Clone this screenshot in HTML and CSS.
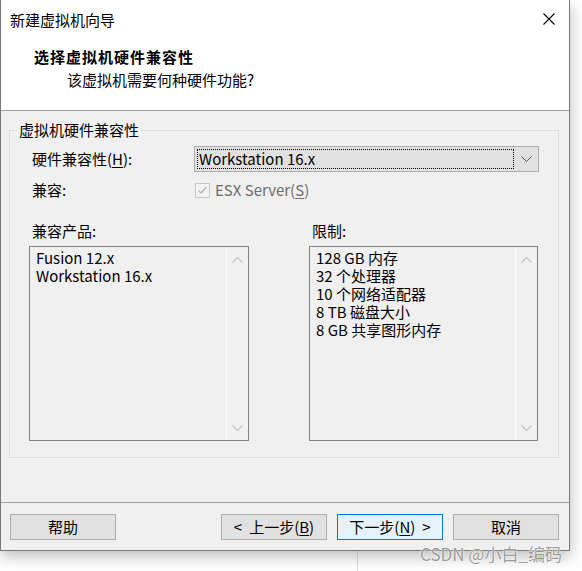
FILE: index.html
```html
<!DOCTYPE html>
<html lang="zh-CN">
<head>
<meta charset="utf-8">
<title>新建虚拟机向导</title>
<link rel="stylesheet" href="styles.css">
</head>
<body>
<div class="bg-line"></div>
<div class="window">
  <div class="titlebar">
    <span class="title">新建虚拟机向导</span>
    <svg class="close" width="12" height="12" viewBox="0 0 12 12"><path d="M0.5 0.5 L11.5 11.5 M11.5 0.5 L0.5 11.5" stroke="#000" stroke-width="1.1" fill="none"/></svg>
  </div>
  <div class="header">
    <div class="h-title">选择虚拟机硬件兼容性</div>
    <div class="h-sub">该虚拟机需要何种硬件功能?</div>
  </div>
  <div class="body">
    <div class="group">
      <div class="group-title">虚拟机硬件兼容性</div>
      <div class="row row-combo">
        <span class="label">硬件兼容性(<u>H</u>):</span>
        <div class="combo">
          <span class="focus">Workstation 16.x</span>
          <svg class="chev" width="11" height="6" viewBox="0 0 11 6"><path d="M0.5 0.5 L5.5 5.5 L10.5 0.5" stroke="#555" stroke-width="1" fill="none"/></svg>
        </div>
      </div>
      <div class="row row-check">
        <span class="label">兼容:</span>
        <span class="check">
          <span class="box"><svg width="13" height="13" viewBox="0 0 13 13"><path d="M2.5 6.5 L5 9 L10.5 3" stroke="#b4b4b4" stroke-width="1.4" fill="none"/></svg></span>
          <span class="check-text">ESX Server(<u>S</u>)</span>
        </span>
      </div>
      <div class="lists">
        <div class="col col-left">
          <div class="col-label">兼容产品:</div>
          <div class="listbox">
            <div class="items">
              <div class="item">Fusion 12.x</div>
              <div class="item">Workstation 16.x</div>
            </div>
            <div class="scroll">
              <svg width="11" height="6" viewBox="0 0 11 6"><path d="M0.5 5.5 L5.5 0.5 L10.5 5.5" stroke="#c4c4c4" stroke-width="1.3" fill="none"/></svg>
              <svg width="11" height="6" viewBox="0 0 11 6"><path d="M0.5 0.5 L5.5 5.5 L10.5 0.5" stroke="#c4c4c4" stroke-width="1.3" fill="none"/></svg>
            </div>
          </div>
        </div>
        <div class="col col-right">
          <div class="col-label">限制:</div>
          <div class="listbox">
            <div class="items">
              <div class="item">128 GB 内存</div>
              <div class="item">32 个处理器</div>
              <div class="item">10 个网络适配器</div>
              <div class="item">8 TB 磁盘大小</div>
              <div class="item">8 GB 共享图形内存</div>
            </div>
            <div class="scroll">
              <svg width="11" height="6" viewBox="0 0 11 6"><path d="M0.5 5.5 L5.5 0.5 L10.5 5.5" stroke="#c4c4c4" stroke-width="1.3" fill="none"/></svg>
              <svg width="11" height="6" viewBox="0 0 11 6"><path d="M0.5 0.5 L5.5 5.5 L10.5 0.5" stroke="#c4c4c4" stroke-width="1.3" fill="none"/></svg>
            </div>
          </div>
        </div>
      </div>
    </div>
  </div>
  <div class="footer">
    <button class="btn">帮助</button>
    <span class="spacer"></span>
    <button class="btn">&lt;<span class="gap"></span>上一步(<u>B</u>)</button>
    <button class="btn btn-default">下一步(<u>N</u>)<span class="gap"></span>&gt;</button>
    <button class="btn">取消</button>
  </div>
</div>
<div class="watermark">CSDN @小白_编码</div>
</body>
</html>
```
FILE: styles.css
```css
* { box-sizing: border-box; }
html, body { margin: 0; padding: 0; }
body {
  width: 582px;
  height: 571px;
  background: #ffffff;
  font-family: "Noto Sans CJK SC", "Noto Sans", sans-serif;
  font-size: 15px;
  color: #000;
  position: relative;
  overflow: hidden;
}
u { text-decoration: underline; text-underline-offset: 2px; }

.bg-line {
  position: absolute;
  left: 357px;
  top: 540px;
  width: 1px;
  height: 40px;
  background: #dedede;
}

.window {
  position: relative;
  width: 570px;
  height: 551px;
  border: 1px solid #777;
  border-top: none;
  background: #f0f0f0;
  box-shadow: 1px 6px 14px rgba(0,0,0,0.25);
  display: flex;
  flex-direction: column;
}

.titlebar {
  height: 38px;
  background: #fff;
  display: flex;
  align-items: center;
  justify-content: space-between;
  padding: 2px 14px 0 9px;
  line-height: 20px;
}
.close { display: block; margin-top: -2px; }

.header {
  height: 73px;
  background: #fff;
  border-bottom: 1px solid #a0a0a0;
  padding: 9px 0 0 33px;
  line-height: 20px;
}
.h-title { font-weight: bold; letter-spacing: 1px; }
.h-sub { margin-top: 3px; padding-left: 33px; }

.body {
  height: 391px;
  padding: 19px 10px 0 8px;
}
.group {
  height: 328px;
  border: 1px solid #dcdcdc;
  padding: 0 19px 0 19px;
  display: flex;
  flex-direction: column;
}
.group-title {
  margin: -11px 0 0 -12px;
  padding: 0 2px;
  background: #f0f0f0;
  line-height: 20px;
  align-self: flex-start;
}

.row { display: flex; align-items: center; }
.label { width: 165px; padding-left: 3px; flex: none; line-height: 20px; }
.row-combo { margin-top: 6px; height: 26px; }
.combo {
  width: 345px;
  height: 26px;
  background: #e1e1e1;
  border: 1px solid #adadad;
  display: flex;
  align-items: center;
  padding: 2px 6px 2px 2px;
}
.focus {
  flex: 1;
  height: 20px;
  border: 1px dotted #000;
  line-height: 18px;
  padding-left: 1px;
}
.chev { margin-left: 7px; display: block; }

.row-check { margin-top: 8px; height: 20px; }
.check { display: flex; align-items: center; color: #6d6d6d; margin-left: 1px; }
.box {
  width: 15px;
  height: 15px;
  border: 1px solid #c6c6c6;
  background: #f4f4f4;
  display: flex;
  align-items: center;
  justify-content: center;
  margin-right: 5px;
}
.box svg { display: block; }
.check-text { line-height: 20px; }

.lists { display: flex; gap: 60px; margin-top: 22px; }
.col-left { width: 220px; }
.col-right { width: 229px; }
.col-label { line-height: 18px; padding-left: 3px; margin-bottom: 6px; }
.listbox {
  height: 195px;
  border: 1px solid #828282;
  display: flex;
}
.items { flex: 1; padding: 2px 0 0 6px; }
.item { height: 18px; line-height: 18px; white-space: nowrap; }
.scroll {
  width: 22px;
  border-left: 1px solid #fbfbfb;
  display: flex;
  flex-direction: column;
  justify-content: space-between;
  align-items: center;
  padding: 10px 0 9px 0;
}
.scroll svg { display: block; }

.footer {
  border-top: 1px solid #a0a0a0;
  padding: 11px 10px 10px 9px;
  display: flex;
  gap: 10px;
}
.spacer { flex: 1; }
.btn {
  width: 106px;
  height: 26px;
  background: #e1e1e1;
  border: 1px solid #adadad;
  font-family: inherit;
  font-size: 15px;
  line-height: 20px;
  padding: 0;
  color: #000;
}
.gap { display: inline-block; width: 7px; }
.btn-default { background: #e5f1fb; border-color: #0078d7; }

.watermark {
  position: absolute;
  left: 420px;
  top: 543px;
  font-size: 17px;
  line-height: 22px;
  color: rgba(135,135,135,0.85);
  text-shadow: 0 0 1px #fff, 0 0 2px #fff;
}
```
